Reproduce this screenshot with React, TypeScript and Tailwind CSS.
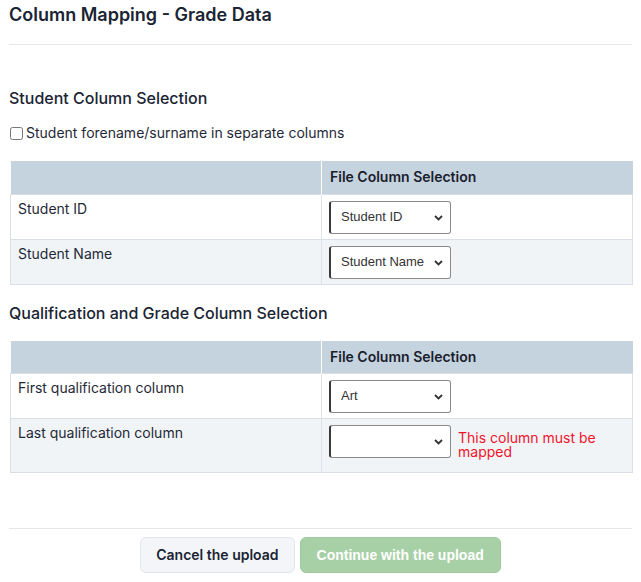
import React from 'react';

type Row = { label: string; value: string; error?: string };

const studentRows: Row[] = [
  { label: 'Student ID', value: 'Student ID' },
  { label: 'Student Name', value: 'Student Name' },
];

const qualRows: Row[] = [
  { label: 'First qualification column', value: 'Art' },
  { label: 'Last qualification column', value: '', error: 'This column must be mapped' },
];

// fake native select, arrow drawn by hand
const Select = ({ value }: { value: string }) => (
  <div className="relative w-[122px] h-[33px] shrink-0">
    <select
      defaultValue={value}
      className="appearance-none w-full h-full bg-white border border-[#8a8a8a] border-l-2 border-l-[#3a3a3a] rounded-[3px] pl-[10px] pr-6 text-[13px] text-[#333] font-['Liberation_Sans',Arial,sans-serif] outline-none"
    >
      <option value={value}>{value}</option>
    </select>
    <svg
      className="pointer-events-none absolute right-[8px] top-[14px]"
      width="9"
      height="6"
      viewBox="0 0 9 6"
      fill="none"
    >
      <path d="M1 1l3.5 3.5L8 1" stroke="#333" strokeWidth="1.8" />
    </svg>
  </div>
);

const MappingTable = ({ rows }: { rows: Row[] }) => (
  <table className="w-[623px] ml-px border-collapse table-fixed text-sm">
    <thead>
      <tr className="bg-[#c5d3de] h-[33px]">
        <th className="w-1/2 border-r border-white"></th>
        <th className="w-1/2 text-left font-semibold pl-2 text-[#1a202c]">File Column Selection</th>
      </tr>
    </thead>
    <tbody>
      {rows.map((row, i) => (
        <tr
          key={row.label}
          className={`${i % 2 === 0 ? 'bg-white' : 'bg-[#f0f4f7]'} border border-[#d9dfe5]`}
        >
          <td className="align-top pl-[7px] pt-[4px] text-[#1f2937] border-r border-[#dde3e8]">
            {row.label}
          </td>
          <td className="align-top px-[7px] pt-[6px] pb-[5px]">
            <div className="flex items-start gap-[7px]">
              <Select value={row.value} />
              {row.error && (
                <span className="text-[#f2132b] leading-[14px] pt-[6px] pb-[8px]">{row.error}</span>
              )}
            </div>
          </td>
        </tr>
      ))}
    </tbody>
  </table>
);

export default function App() {
  return (
    <div className="w-[641px] h-[582px] bg-white px-[9px] font-['Inter',sans-serif] text-[#1a2433]">
      <h1 className="text-[18px] font-semibold leading-7 pt-px">Column Mapping - Grade Data</h1>
      <hr className="mt-[15px] border-t border-[#e5e7eb]" />

      <h2 className="mt-[41px] text-[16px] font-medium leading-6">Student Column Selection</h2>
      <label className="mt-[13px] flex items-center gap-[3px] text-sm text-[#1f2937]">
        <input type="checkbox" className="w-[13px] h-[13px] ml-px" />
        Student forename/surname in separate columns
      </label>

      <div className="mt-[18px]">
        <MappingTable rows={studentRows} />
      </div>

      <h2 className="mt-[16px] text-[16px] font-medium leading-6">Qualification and Grade Column Selection</h2>

      <div className="mt-[16px]">
        <MappingTable rows={qualRows} />
      </div>

      <hr className="mt-[55px] border-t border-[#e5e7eb]" />
      <div className="mt-2 flex justify-center gap-[5px]">
        <button className="h-9 px-[15px] rounded-md bg-[#f4f5f8] border border-[#e3e5ea] text-sm font-semibold text-[#1a2433]">
          Cancel the upload
        </button>
        <button className="h-9 px-[16px] rounded-md bg-[#a8d0a7] border border-[#a1c9a0] text-sm font-bold text-white font-['Liberation_Sans',Arial,sans-serif]">
          Continue with the upload
        </button>
      </div>
    </div>
  );
}
